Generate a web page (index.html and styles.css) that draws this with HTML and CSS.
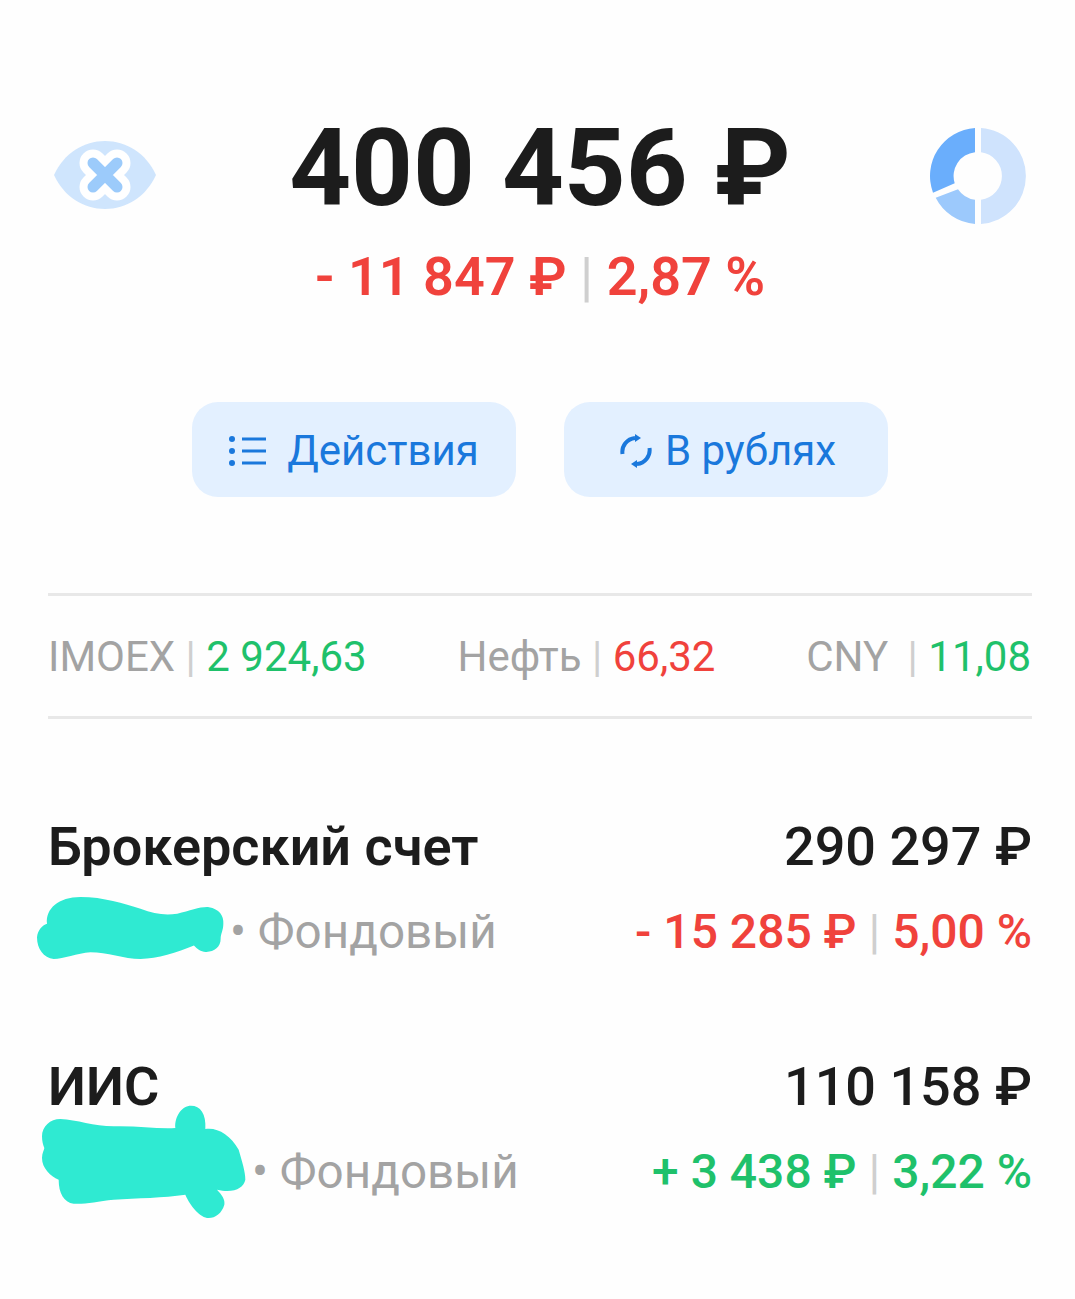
FILE: index.html
```html
<!DOCTYPE html>
<html lang="ru">
<head>
    <meta charset="UTF-8">
    <title>Портфель</title>
    <link rel="stylesheet" href="styles.css">
</head>
<body>
    <!-- Total -->
    <header class="summary">
        <svg class="eye-icon" viewBox="0 0 102 68">
            <path fill="#cfe5fd" d="M0 34C10 12 30 0 51 0S92 12 102 34C92 56 72 68 51 68S10 56 0 34Z"/>
            <path stroke="#fff" stroke-width="27" stroke-linecap="round" d="M39 22L63 46M63 22L39 46"/>
            <path stroke="#9ccbfb" stroke-width="11" stroke-linecap="round" d="M39 22L63 46M63 22L39 46"/>
        </svg>
        <div class="total">
            <div class="total-value">400 456 ₽</div>
            <div class="change negative total-change">- 11 847 ₽ <span class="sep">|</span> 2,87 %</div>
        </div>
        <svg class="donut-icon" viewBox="0 0 96 96">
            <path fill="#cfe3fd" d="M51 0.100A48 48 0 0 1 51 95.900L51 71.800A24 24 0 0 0 51 24.200Z"/>
            <path fill="#6aaefc" d="M45 0.100A48 48 0 0 0 3 64.700L24.700 55.300A24 24 0 0 1 45 24.200Z"/>
            <path fill="#9cc9fc" d="M5.700 69.700A48 48 0 0 0 45 95.900L45 71.800A24 24 0 0 1 28 61.300Z"/>
        </svg>
    </header>

    <!-- Buttons -->
    <div class="actions">
        <button class="action-btn">
            <svg class="list-icon" viewBox="0 0 38 32">
                <circle cx="3" cy="4" r="3"/>
                <circle cx="3" cy="16" r="3"/>
                <circle cx="3" cy="28" r="3"/>
                <path d="M13 4H37M13 16H37M13 28H37"/>
            </svg>
            Действия
        </button>
        <button class="action-btn">
            <svg class="refresh-icon" viewBox="0 0 32 34">
                <path class="arc" d="M2.500 20A14 14 0 0 1 15 4M29.500 14A14 14 0 0 1 17 30"/>
                <path class="head" d="M15 0L21 4L15 8ZM17 26L11 30L17 34Z"/>
            </svg>
            В рублях
        </button>
    </div>

    <!-- Market -->
    <div class="ticker">
        <div>IMOEX <span class="sep">|</span> <span class="positive">2 924,63</span></div>
        <div>Нефть <span class="sep">|</span> <span class="negative">66,32</span></div>
        <div>CNY <span class="sep sep-wide">|</span> <span class="positive">11,08</span></div>
    </div>

    <!-- Accounts -->
    <div class="account">
        <div class="account-line">
            <div class="account-name">Брокерский счет</div>
            <div class="account-value">290 297 ₽</div>
        </div>
        <div class="account-line account-sub">
            <div class="account-type">
                <svg class="blob blob-one" viewBox="20 50 560 185"><path fill="#2fead2" d="M20 170C22 150 35 135 50 130C45 85 85 50 150 50C220 50 280 70 330 85C370 100 400 105 440 100C480 90 510 78 535 80C565 85 580 105 578 130C578 150 570 160 570 175C570 200 550 215 525 214C510 214 500 205 490 195C440 215 380 235 330 235C280 235 230 215 180 215C140 218 100 235 70 235C40 232 20 205 20 170Z"/></svg>
                <span>• Фондовый</span>
            </div>
            <div class="change account-change negative">- 15 285 ₽ <span class="sep">|</span> 5,00 %</div>
        </div>
    </div>

    <div class="account account-last">
        <div class="account-line">
            <div class="account-name">ИИС</div>
            <div class="account-value">110 158 ₽</div>
        </div>
        <div class="account-line account-sub">
            <div class="account-type">
                <svg class="blob blob-two" viewBox="32 46 615 342"><path fill="#2fead2" d="M35 140C35 110 60 88 90 88C140 90 190 110 250 110C320 108 380 118 435 115C432 80 455 48 482 48C510 48 528 72 525 118C560 112 600 135 625 180C635 215 645 245 645 270C640 295 610 312 560 300C575 315 585 330 582 345C575 370 555 385 535 385C510 385 480 350 465 315C400 325 320 325 250 330C200 335 160 345 130 342C100 338 85 310 85 270C60 260 35 235 35 205C35 190 42 180 42 175C38 165 35 155 35 140Z"/></svg>
                <span>• Фондовый</span>
            </div>
            <div class="change account-change positive">+ 3 438 ₽ <span class="sep">|</span> 3,22 %</div>
        </div>
    </div>
</body>
</html>
```

FILE: styles.css
```css
:root {
    --dark: #1c1c1c;
    --gray: #a3a3a3;
    --red: #f0423c;
    --green: #1fc16b;
    --blue: #1a78dc;
    --blue-bg: #e3f0ff;
    --line: #e8e8e8;
}

body {
    font-family: Roboto, "Liberation Sans", sans-serif;
    background-color: #fefefe;
    color: var(--dark);
    margin: 0;
    padding: 106px 43px 60px 48px;
}

.negative { color: var(--red); }
.positive { color: var(--green); }

.sep {
    color: #cfcfcf;
    font-weight: 400;
}

/* Total */
.summary {
    display: flex;
    justify-content: space-between;
    align-items: flex-start;
    padding: 0 6px;
}

.eye-icon {
    width: 102px;
    height: 68px;
    margin-top: 35px;
}

.donut-icon {
    width: 96px;
    height: 96px;
    margin-top: 22px;
}

.total {
    display: flex;
    flex-direction: column;
    align-items: center;
    margin-right: 6px;
}

.total-value {
    font-size: 108px;
    font-weight: 700;
    line-height: 124px;
}

.total-change {
    margin-top: 18px;
    font-size: 54px;
    font-weight: 600;
}

.change {
    line-height: 58px;
    white-space: nowrap;
}

.account-change {
    font-size: 48px;
    font-weight: 500;
}

/* Buttons */
.actions {
    display: flex;
    justify-content: center;
    gap: 48px;
    margin: 96px 0 96px;
}

.action-btn {
    width: 324px;
    height: 95px;
    padding: 2px 0 0;
    border: none;
    border-radius: 26px;
    background-color: var(--blue-bg);
    color: var(--blue);
    font-family: inherit;
    font-size: 42px;
    display: flex;
    align-items: center;
    justify-content: center;
    gap: 20px;
}

.list-icon {
    width: 38px;
    height: 32px;
    fill: var(--blue);
}

.list-icon path {
    fill: none;
    stroke: var(--blue);
    stroke-width: 3;
}

.refresh-icon {
    width: 32px;
    height: 34px;
    margin: 0 -7px 0 4px;
}

.refresh-icon .arc {
    fill: none;
    stroke: var(--blue);
    stroke-width: 4;
}

.refresh-icon .head {
    fill: var(--blue);
}

/* Market */
.ticker {
    display: flex;
    justify-content: space-between;
    border-top: 3px solid var(--line);
    border-bottom: 3px solid var(--line);
    padding: 0 1px 0 0;
    height: 120px;
    align-items: center;
    font-size: 42px;
    color: var(--gray);
    white-space: nowrap;
}

.sep-wide {
    margin-left: 9px;
}

/* Accounts */
.account {
    margin-top: 98px;
}

.account-last {
    margin-top: 96px;
}

.account-line {
    display: flex;
    justify-content: space-between;
    align-items: center;
}

.account-name,
.account-value {
    font-size: 54px;
    font-weight: 500;
    line-height: 60px;
}

.account-name {
    font-weight: 600;
}

.account-sub {
    margin-top: 26px;
}

.account-type {
    display: flex;
    align-items: center;
    gap: 6px;
    font-size: 47.600px;
    color: var(--gray);
    white-space: nowrap;
}

.blob {
    flex-shrink: 0;
}

.blob-one {
    width: 187px;
    height: 62px;
    margin: -8px 0 0 -11px;
}

.blob-two {
    width: 205px;
    height: 114px;
    margin: -40px 0 -20px -7px;
}
```
